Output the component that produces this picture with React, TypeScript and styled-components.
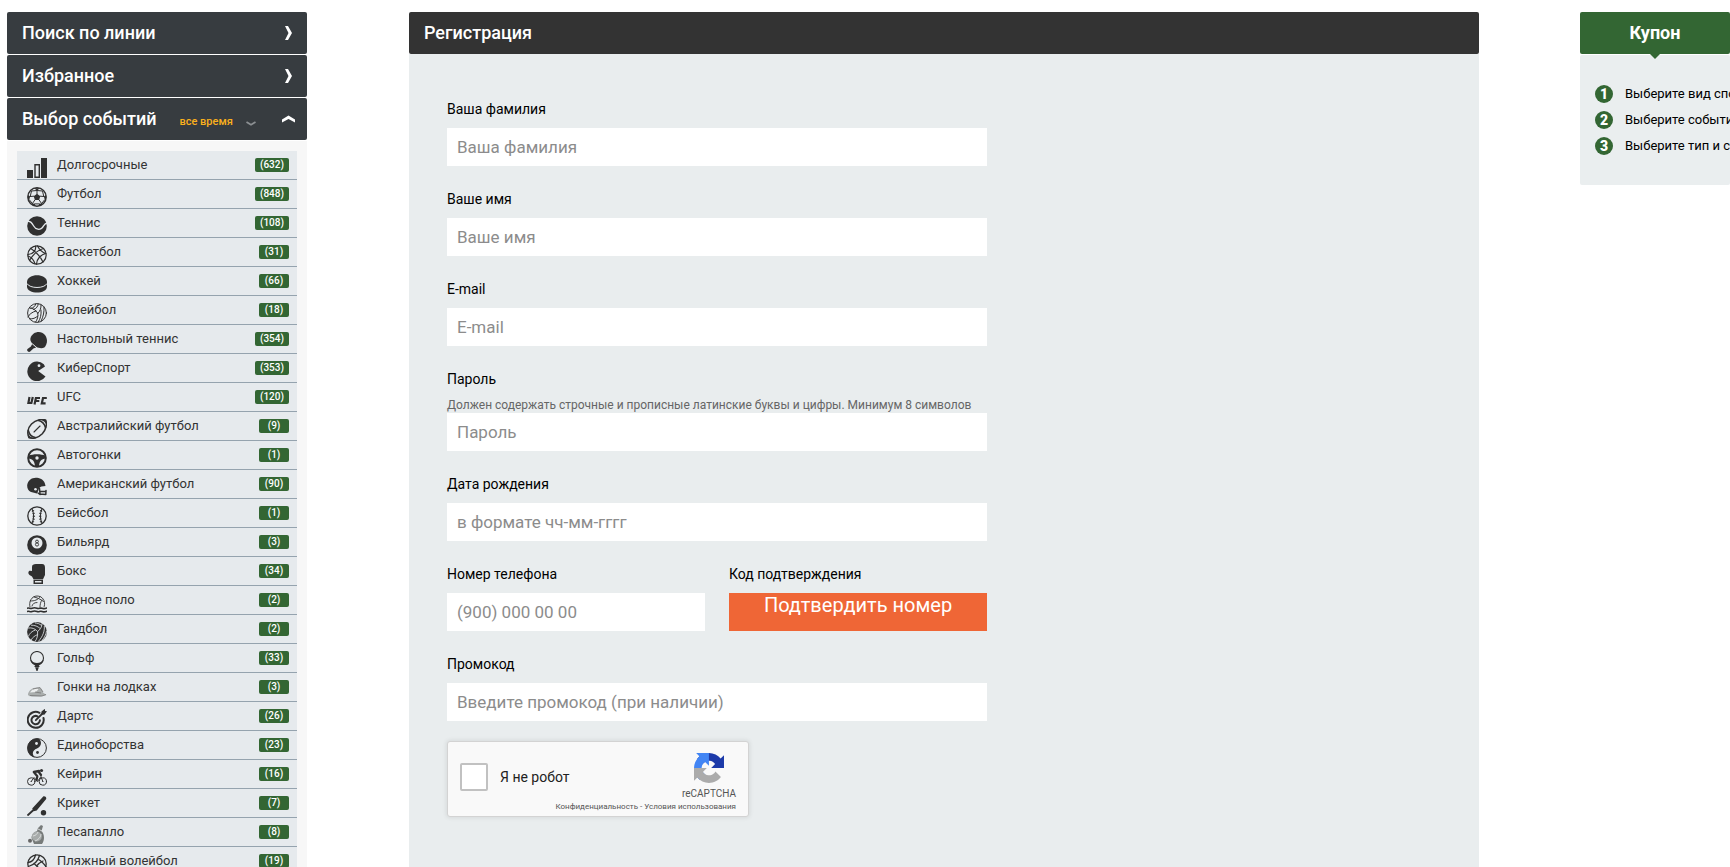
import React from "react";
import styled, { createGlobalStyle } from "styled-components";

const Global = createGlobalStyle`
  * { box-sizing: border-box; }
  html { scrollbar-width: none; }
  body { margin: 0; background: #fff; font-family: Roboto, "Noto Sans", sans-serif; }
`;

const Page = styled.div`
  display: flex;
  padding: 12px 0 0 7px;
  min-height: 100vh;
`;

const Sidebar = styled.aside`
  display: flex;
  flex-direction: column;
  flex: none;
  gap: 1px;
  width: 300px;
`;

const PanelButton = styled.button`
  display: flex;
  align-items: center;
  justify-content: space-between;
  height: 42px;
  flex: none;
  padding: 0 15px;
  border: 0;
  border-radius: 2px;
  background: #373c40;
  color: #fff;
  font: 500 18px/42px Roboto, sans-serif;
  text-align: left;
`;

const PanelBar = styled.div`
  display: flex;
  align-items: center;
  height: 42px;
  flex: none;
  padding: 0 11px 0 15px;
  border-radius: 2px;
  background: #373c40;
`;

const BarTitle = styled.h2`
  margin: 0;
  color: #fff;
  font: 500 18px/42px Roboto, sans-serif;
`;

const PeriodSelect = styled.select`
  appearance: none;
  margin: 6px 0 0 23px;
  padding: 0;
  border: 0;
  background: transparent;
  color: #fbb01c;
  font: 500 11px/16px Roboto, sans-serif;
`;

const PeriodMark = styled.svg`
  margin: 8px 0 0 12px;
`;

const Toggle = styled.button`
  display: flex;
  margin-left: auto;
  padding: 0;
  border: 0;
  background: transparent;
`;

const EventBox = styled.div`
  flex: 1;
  padding: 10px;
  background: #f7f7f7;
`;

const EventList = styled.ul`
  margin: 0;
  padding: 0;
  list-style: none;
`;

const EventLink = styled.a`
  display: flex;
  align-items: flex-start;
  height: 29px;
  padding: 0 8px 0 10px;
  border-bottom: 1px solid #95a3ae;
  background: #e6eaed;
  color: #333;
  font-size: 13px;
  line-height: 27px;
  text-decoration: none;
`;

const IconSlot = styled.svg`
  flex: none;
  width: 20px;
  height: 20px;
  margin: 7px 10px 0 0;
`;

const Count = styled.span`
  min-width: 30px;
  height: 14px;
  margin: 7px 0 0 auto;
  padding: 0 5px;
  border-radius: 2px;
  background: #336633;
  color: #fff;
  font-size: 10px;
  font-weight: 500;
  line-height: 14px;
  text-align: center;
`;

const Main = styled.main`
  display: flex;
  flex: 1;
  flex-direction: column;
  min-width: 0;
  margin: 0 101px 0 102px;
`;

const MainTitle = styled.h1`
  margin: 0;
  padding: 0 15px;
  border-radius: 2px;
  background: #333;
  color: #fff;
  font: 500 18px/42px Roboto, sans-serif;
`;

const Form = styled.form`
  flex: 1;
  padding: 42px 38px;
  background: #e9edee;
`;

const Fields = styled.div`
  display: flex;
  flex-direction: column;
  max-width: 540px;
`;

const Field = styled.div`
  display: flex;
  flex-direction: column;
  min-width: 0;
  margin-bottom: 20px;
`;

const Pair = styled.div`
  display: grid;
  grid-template-columns: 1fr 1fr;
  column-gap: 24px;
`;

const Label = styled.label`
  height: 32px;
  color: #000;
  font-size: 14px;
  line-height: 26px;
`;

const Hint = styled.p`
  height: 15px;
  margin: 0;
  color: #666;
  font-size: 12px;
  line-height: 15px;
  white-space: nowrap;
`;

const Input = styled.input`
  width: 100%;
  height: 38px;
  padding: 0 10px;
  border: 0;
  background: #fff;
  color: #333;
  font: 400 17px Roboto, sans-serif;
  &::placeholder { color: #8c8c8c; opacity: 1; }
`;

const ConfirmButton = styled.button`
  display: flex;
  align-items: flex-start;
  justify-content: center;
  height: 38px;
  padding: 0;
  border: 0;
  background: #ef6636;
  color: #fff;
  font: 400 20px/24px Roboto, sans-serif;
`;

const Captcha = styled.div`
  display: flex;
  width: 302px;
  height: 76px;
  padding: 0 12px;
  border: 1px solid #d3d3d3;
  border-radius: 3px;
  background: #f9f9f9;
  box-shadow: 0 0 4px 1px rgba(0, 0, 0, 0.08);
`;

const RobotLabel = styled.label`
  display: flex;
  align-self: flex-start;
  align-items: center;
  gap: 12px;
  margin-top: 21px;
  color: #222;
  font-size: 14px;
  line-height: 16px;
  white-space: nowrap;
`;

const RobotCheck = styled.input`
  appearance: none;
  width: 28px;
  height: 28px;
  margin: 0;
  border: 2px solid #c1c1c1;
  border-radius: 2px;
  background: #fff;
`;

const Brand = styled.div`
  display: flex;
  flex-direction: column;
  align-items: flex-end;
  flex: 1;
  width: 0;
  padding-top: 11px;
  color: #555;
`;

const BrandLogo = styled.svg`
  flex: none;
  margin-right: 12px;
`;

const BrandName = styled.span`
  margin-top: 5px;
  font-size: 10px;
  line-height: 12px;
`;

const BrandLinks = styled.span`
  font-size: 8px;
  line-height: 14px;
  white-space: nowrap;
  a { color: inherit; text-decoration: none; }
`;

const Coupon = styled.aside`
  flex: none;
  width: 150px;
  overflow: hidden;
`;

const CouponTab = styled.button`
  position: relative;
  display: block;
  width: 100%;
  height: 42px;
  padding: 0;
  border: 0;
  border-radius: 2px;
  background: #336633;
  color: #fff;
  font: 700 18px/42px Roboto, sans-serif;
  &::after {
    content: "";
    position: absolute;
    top: 100%;
    left: 50%;
    margin-left: -5px;
    border: 5px solid transparent;
    border-top-color: #336633;
    border-bottom-width: 0;
  }
`;

const Steps = styled.ol`
  display: flex;
  flex-direction: column;
  gap: 8px;
  margin: 1px 0 0;
  padding: 30px 15px;
  border-radius: 2px;
  background: #eaeeef;
  list-style: none;
`;

const Step = styled.li`
  display: flex;
  gap: 12px;
  color: #000;
  font-size: 13px;
  line-height: 18px;
  white-space: nowrap;
`;

const StepNumber = styled.span`
  flex: none;
  width: 18px;
  height: 18px;
  border-radius: 50%;
  background: #336633;
  color: #fff;
  font-size: 14px;
  font-weight: 900;
  text-align: center;
`;

const ink = "#303030";
const pale = "#e6eaed";
const line = { fill: "none", stroke: ink, strokeWidth: 1.1, strokeLinecap: "round", strokeLinejoin: "round" } as const;
const gap = { fill: "none", stroke: pale, strokeWidth: 1 } as const;

const icons: Record<string, React.ReactNode> = {
  bars: <><path fill={ink} d="M0 12h6v8H0zM14 0h6v20h-6z" /><path {...line} strokeLinejoin="miter" strokeWidth="1.4" d="M8 6.7h4.3v12.6H8z" /></>,
  football: <><circle {...line} strokeWidth="1.4" cx="10" cy="10" r="9.2" /><path fill={ink} d="M10 6.8l3.300 2.400-1.200 3.800H7.900L6.700 9.200zM7 1.200h6L10 3.600zM.9 8l2.200 1.500-.9 3.600-1.200-.6zM19.100 8l-2.200 1.500.9 3.600 1.200-.6zM5.200 16.500l2.600.2.500 2.400-2.800-.9zM14.800 16.500l-2.600.2-.5 2.400 2.800-.9z" /><path {...line} strokeWidth="1" d="M10 3.500v3.500M13.300 9.200l3.500.3M12.100 13l2.500 3.500M7.900 13l-2.500 3.500M6.700 9.200l-3.500.3M10 3.500L4.500 4l-1.300 5.500M10 3.500l5.500.5 1.300 5.500M2.500 13l2.900 3.500M17.500 13l-2.900 3.500M7.800 16.900h4.400" /></>,
  tennis: <><circle fill={ink} cx="10" cy="10" r="9.8" /><path {...gap} strokeWidth="1.3" d="M0 5.500C3.500 4.500 5 7 6.700 10c2 3.700 6.300 4.300 8.500 1.800C17 9.600 17.500 7.300 20 7" /></>,
  basketball: <g {...line} strokeWidth="1.2"><circle cx="10" cy="10" r="9.2" /><path d="M3.800 3.400C8 6 13.500 12 16 17M2.500 15.500C6 9.500 11 5 16.500 3.500M8.500 1C9.500 5 6 9.500 1 9.500M19.100 8.500C14 9.500 9.500 14 9.500 19.200M10.500 1c1.500 3 5 6.500 8.500 7.500M1 11c3 1 6 4.500 7 7.900" /></g>,
  puck: <><path fill={ink} d="M0 8c0-9 20-9 20 0v4.500c0 8-20 8-20 0z" /><path {...gap} d="M0 9.500c2.500 5.300 17.500 5.300 20 0" /></>,
  volleyball: <g {...line} strokeWidth="1"><circle cx="10" cy="10" r="9.4" /><path d="M10.800 10.200C9 7 5.500 5 2.600 4.800M10.800 10.200c2-1.500 3.600-5 3.200-8.600M10.800 10.200c.5 3-.3 6.500-2.300 9M6.500 6.500C9.500 5.500 11 3.500 11.200.8M3.800 5.500C6.500 5 8.300 3 8.800 1M9 8C5 9 2 11.500 1 14M10.900 13c-2.500 2-5 3.300-8.300 2.800M17 4c.3 5-.5 9-3 14.400M14 7c.5 4.500-.5 8.500-2.700 12" /></g>,
  paddle: <><path fill={ink} d="M3.500 6C5.500-.5 14-2 18 3c3.200 4.500 2.200 9.500-.7 12.500-2.300 1.200-6 .5-8-.5L5 11.200C3.700 9.500 3 8 3.500 6z" /><path fill={ink} d="M5.200 12l4 3.500-2.800 1.100-3.200 3C1.500 20.800-.8 18.600.5 17l3.400-2.600z" /><path {...gap} strokeWidth=".7" d="M4.700 11.200l5.500 4.800" /></>,
  pacman: <><path fill={ink} d="M16.800 3.200A9.800 9.800 0 1 0 18.500 15.500L11.200 10 18 5.500z" /><circle fill={pale} cx="12" cy="4.700" r="1.4" /></>,
  ufc: <g fill="none" stroke={ink} strokeWidth="2.2"><path d="M2.500 7L1.400 13h3L5.800 7M7.500 14.500l1.400-6.500h4.100M8.500 11h3.800M19.800 8h-3.800l-1.200 5.400h3.800" /></g>,
  aussie: <><path {...line} strokeWidth="1.5" d="M2.200 18.500C-.2 15.500.5 9 4.500 5 9 .5 16-.5 18.600 1.300 20.500 4.500 19 10.700 15.300 14.800 11 19.300 5 20 2.200 18.500z" /><path {...line} strokeWidth="1.6" d="M11.500 1.500c4 1 6 3.500 7 7M1.300 11.500c1 4 3.500 6.500 7 7" /><path fill={ink} d="M14 .8l5.300-.2.200 5.400C18.500 3.500 16.500 1.800 14 .8zM.8 14l.5 5.200 5.500.200C4 18.500 2 17 .8 14z" /><path {...line} d="M7 13L13 7" /></>,
  wheel: <><circle {...line} strokeWidth="2" cx="10" cy="10" r="8.800" /><path fill={ink} d="M1.500 7.800C6 5.800 14 5.800 18.500 7.800v2.900c-4 0-6 2-6.500 7.300H8C7.500 12.700 5.500 10.700 1.500 10.700z" /><circle fill={pale} cx="10" cy="10" r="1.7" /></>,
  helmet: <><path fill={ink} d="M.2 8C1 2.500 6-.3 11.500 1c4 .8 6.500 3.800 7 8l-4 .6c-1.500.6-2.700 1.800-3 3.400L10 16.500 4 15C1.200 13.700 0 11.500.2 8z" /><circle fill={pale} cx="8.500" cy="12.300" r="1.3" /><path {...line} strokeWidth="1.5" d="M12.500 11.500l.5 5.500 5.800.5.200-4M13 14.500h6M11 16l2 1.500" /></>,
  baseball: <><circle {...line} strokeWidth="1.3" cx="10" cy="10" r="9.2" /><path {...line} d="M5 2.800c2 4.500 2 10 0 14.500M15 2.800c-2 4.500-2 10 0 14.500" /><path {...line} strokeLinecap="butt" strokeWidth="2.4" strokeDasharray=".9 1.8" d="M5.800 4.500c1.400 3.500 1.400 8 0 11.500M14.200 4.500c-1.400 3.500-1.400 8 0 11.500" /></>,
  billiards: <><circle fill={ink} cx="10" cy="10" r="9.8" /><circle fill={pale} cx="10" cy="8" r="5.5" /><g fill="none" stroke={ink} strokeWidth=".9"><circle cx="10" cy="6.500" r="1.4" /><circle cx="10" cy="9.500" r="1.6" /></g></>,
  boxing: <><path fill={ink} d="M5 3C5 .8 6.500 0 9 0h6c2.300 0 3 1.500 3 4v7l-2 4.200H6.500L5 12.500 2.500 11C.8 9.500 1.200 6.800 3 6.800L5 7z" /><path fill={ink} d="M6.500 15.700H16V20H6.500z" /><path fill={pale} d="M8 17h6.500v1.500H8z" /></>,
  polo: <><g {...line} strokeWidth=".9"><path d="M3 14C1.500 9 4.500 3 10 3s9 5 7.200 10.500M3.300 8c4 0 8-1 9.700-4.300M7 4c2.500.5 6.500 2 9.500 4.500M5 13c.5-2 2-3.500 5-3.500M13 14c0-2.500.5-5 2-7" /></g><path {...line} strokeWidth="1.6" d="M0 15.300c2-1 3 .8 5 0s3-.8 5 0 3-.8 5 0 3 .4 5-.3M0 18.500c2-1 3 .8 5 0s3-.8 5 0 3-.8 5 0 3 .4 5-.3" /></>,
  handball: <><circle fill={ink} cx="10" cy="10" r="9.9" /><g {...gap} strokeWidth=".8"><path d="M1 6c4-.5 7 .5 9.500 3.500M10.500 9.500C13 8 15 5 15 1.500M10.500 9.500c.5 4-.5 7.500-2.500 10M4 3.200c4 0 6.500 1 9 3.200M8 1c2.500 0 4.500.8 6.500 2.500M8.500 8C5 9 2.500 11.500 1.300 14.500M10.800 12.500C8 13.500 5.500 15.500 4 18M17.300 4c.5 5-1.500 10.500-6 15.500M19.500 9c-.5 3.500-2 6.500-4.500 9.500" /></g></>,
  golf: <><circle {...line} strokeWidth="1.100" cx="10" cy="7" r="6.500" /><path fill={ink} d="M3.500 8.500c3 4.800 10 4.800 13 0 0 2.700-2 5-4 5.500l-1 1.200h-3L7.500 14c-2-.5-4-2.800-4-5.500zM7 15h6l-1.500 1.500h-3zM8.300 16.800h3.400L10.500 20h-1z" /></>,
  boat: <><path fill="#aaaead" d="M1 14c1-4 5-7 10-6.500 3 .4 4.500 2.500 5 5l3.500 2.500-6 1.500H6c-3 0-5.500-.8-5-2.500z" /><path fill="#eceeee" d="M3 12.500c2-3.500 6-4.700 8.500-3.500L9 12z" /><path fill="none" stroke="#777" strokeWidth=".8" d="M6 9l7-1.500 3 4.500M3 15.500l12 .5 4-1.500M8 12l6 1" /></>,
  darts: <><g {...line} strokeWidth="2"><path d="M12.500 3.800A8 8 0 1 0 16.500 9M10.500 7.300A4.200 4.200 0 1 0 12.900 11.300" /></g><path {...line} strokeWidth="1.8" d="M8.800 11.200L17 3" /><path fill={ink} d="M14.500 2.500L17.800-.2l.3 2.200 1.900.3-2.700 3.400-3-.3z" /></>,
  yinyang: <><circle fill={pale} stroke={ink} strokeWidth="1" cx="10" cy="10" r="9.4" /><path fill={ink} d="M12 .7C6-.8.500 4 .5 10S4 18.500 8 19.500c-4-4-2-7.500 2-9S15.500 4 12 .7z" /><circle fill={pale} cx="9.500" cy="5.500" r="1.4" /><circle fill={ink} cx="10.500" cy="14.500" r="1.4" /></>,
  cycling: <><g {...line} strokeWidth="1"><circle cx="4.200" cy="14.500" r="3.700" /><circle cx="15.800" cy="14.500" r="3.700" /><path d="M4.200 14.500L7 10.500l3.500 4L14 9.500l1.800 5M15.800 14.500h.1M4.200 14.500h.1" /></g><path {...line} strokeWidth="2.300" d="M12 4L6.800 5l3.500 4.200-.8 4M11.500 4.500l2.500 3.500" /><circle fill={ink} cx="14.500" cy="3.500" r="1.600" /></>,
  cricket: <><path fill={ink} d="M16 .8c1.200-1.400 4.200.600 3 2.400L9.700 14.500l-3 .8L5.200 12.500z" /><path {...line} strokeWidth="1.8" d="M7 13.500L1 19" /><circle fill={ink} cx="16.500" cy="16.700" r="2.700" /></>,
  pesapallo: <><path fill="#777b7a" d="M11 3l3-3 2 1-1.500 5c3 3 3.500 9 .5 13H7L4.500 13c0-3 3-6 5.500-7z" /><circle fill="#a7abaa" cx="9.800" cy="11.500" r="5" /><path fill="none" stroke="#e6e8e8" strokeWidth=".8" d="M11 4l4 2M6 11c3-.5 4-2 5-4M8 16c3-1 6-4 6-7" /><circle fill="#666" cx="3" cy="15.800" r="2" /></>,
  beach: <g {...line} strokeWidth="1.3"><circle cx="10" cy="10" r="9.2" /><path d="M1 8.500c3.500-.5 6.500-3 7.500-7.500M1.500 12.500C6.500 11 11 7 12.500 1.500M7 9.500l8.500 8M11.500 5.500c3 1.500 5.500 4.500 7.500 7M9.500 12c2-2.500 4-4 6.500-5" /></g>,
};

const events: [string, string, number][] = [
  ["Долгосрочные", "bars", 632],
  ["Футбол", "football", 848],
  ["Теннис", "tennis", 108],
  ["Баскетбол", "basketball", 31],
  ["Хоккей", "puck", 66],
  ["Волейбол", "volleyball", 18],
  ["Настольный теннис", "paddle", 354],
  ["КиберСпорт", "pacman", 353],
  ["UFC", "ufc", 120],
  ["Австралийский футбол", "aussie", 9],
  ["Автогонки", "wheel", 1],
  ["Американский футбол", "helmet", 90],
  ["Бейсбол", "baseball", 1],
  ["Бильярд", "billiards", 3],
  ["Бокс", "boxing", 34],
  ["Водное поло", "polo", 2],
  ["Гандбол", "handball", 2],
  ["Гольф", "golf", 33],
  ["Гонки на лодках", "boat", 3],
  ["Дартс", "darts", 26],
  ["Единоборства", "yinyang", 23],
  ["Кейрин", "cycling", 16],
  ["Крикет", "cricket", 7],
  ["Песапалло", "pesapallo", 8],
  ["Пляжный волейбол", "beach", 19],
];

const Chevron = () => (
  <svg width="7" height="14" viewBox="0 0 7 14" aria-hidden="true">
    <path fill="#fff" d="M0 0h3l4 7-4 7H0l3.500-7z" />
  </svg>
);

type TextFieldProps = { id: string; label: string; placeholder: string; type?: string; hint?: string };

const TextField = ({ id, label, placeholder, type = "text", hint }: TextFieldProps) => (
  <Field>
    <Label htmlFor={id}>{label}</Label>
    {hint && <Hint>{hint}</Hint>}
    <Input id={id} type={type} placeholder={placeholder} />
  </Field>
);

export default function App() {
  return (
    <>
      <Global />
      <Page>
        <Sidebar>
          <PanelButton type="button">Поиск по линии<Chevron /></PanelButton>
          <PanelButton type="button">Избранное<Chevron /></PanelButton>
          <PanelBar>
            <BarTitle>Выбор событий</BarTitle>
            <PeriodSelect aria-label="Период"><option>все время</option></PeriodSelect>
            <PeriodMark width="10" height="5" viewBox="0 0 10 5" aria-hidden="true">
              <path fill="none" stroke="#8b8f92" strokeWidth="1.8" d="M.5 1L5 3.700 9.500 1" />
            </PeriodMark>
            <Toggle type="button" aria-label="Свернуть">
              <svg width="15" height="8" viewBox="0 0 15 8" aria-hidden="true">
                <path fill="#fff" d="M1 4.500L7.500.5l6.500 4v3l-6.500-3.500L1 7.500z" />
              </svg>
            </Toggle>
          </PanelBar>
          <EventBox>
            <EventList>
              {events.map(([name, icon, count]) => (
                <li key={name}>
                  <EventLink href="#">
                    <IconSlot viewBox="0 0 20 20" aria-hidden="true">{icons[icon]}</IconSlot>
                    {name}
                    <Count>({count})</Count>
                  </EventLink>
                </li>
              ))}
            </EventList>
          </EventBox>
        </Sidebar>

        <Main>
          <MainTitle>Регистрация</MainTitle>
          <Form>
            <Fields>
              <TextField id="surname" label="Ваша фамилия" placeholder="Ваша фамилия" />
              <TextField id="name" label="Ваше имя" placeholder="Ваше имя" />
              <TextField id="email" label="E-mail" placeholder="E-mail" type="email" />
              <TextField
                id="password"
                label="Пароль"
                placeholder="Пароль"
                type="password"
                hint="Должен содержать строчные и прописные латинские буквы и цифры. Минимум 8 символов"
              />
              <TextField id="birth" label="Дата рождения" placeholder="в формате чч-мм-гггг" />
              <Pair>
                <TextField id="phone" label="Номер телефона" placeholder="(900) 000 00 00" type="tel" />
                <Field>
                  <Label htmlFor="confirm">Код подтверждения</Label>
                  <ConfirmButton id="confirm" type="button">Подтвердить номер</ConfirmButton>
                </Field>
              </Pair>
              <TextField id="promo" label="Промокод" placeholder="Введите промокод (при наличии)" />
              <Captcha>
                <RobotLabel>
                  <RobotCheck type="checkbox" />
                  Я не робот
                </RobotLabel>
                <Brand>
                  <BrandLogo width="30" height="30" viewBox="0 0 64 64" aria-hidden="true">
                    <path fill="#1c3aa9" d="M64 31.955l-.033-1.370V4.687l-7.160 7.160C50.948 4.674 42.033.093 32.050.093c-10.389 0-19.622 4.960-25.458 12.640l11.736 11.860a15.550 15.550 0 0 1 4.754-5.334c2.050-1.600 4.952-2.906 8.968-2.906.485 0 .860.057 1.135.163 4.976.393 9.288 3.140 11.828 7.124l-8.307 8.307L64 31.953" />
                    <path fill="#4285f4" d="M31.862.094l-1.370.033H4.594l7.160 7.160C4.580 13.147 0 22.060 0 32.046c0 10.389 4.960 19.622 12.640 25.458L24.500 45.768a15.550 15.550 0 0 1-5.334-4.754c-1.600-2.050-2.906-4.952-2.906-8.968 0-.485.057-.86.163-1.135.393-4.976 3.140-9.288 7.124-11.828l8.307 8.307L31.860.095" />
                    <path fill="#ababab" d="M.001 32.045l.033 1.370v25.898l7.160-7.160c5.860 7.173 14.774 11.754 24.760 11.754 10.389 0 19.622-4.960 25.458-12.640l-11.736-11.860a15.550 15.550 0 0 1-4.754 5.334c-2.050 1.600-4.952 2.906-8.968 2.906-.485 0-.860-.057-1.135-.163-4.976-.393-9.288-3.140-11.828-7.124l8.307-8.307L0 32.048" />
                  </BrandLogo>
                  <BrandName>reCAPTCHA</BrandName>
                  <BrandLinks><a href="#">Конфиденциальность</a> - <a href="#">Условия использования</a></BrandLinks>
                </Brand>
              </Captcha>
            </Fields>
          </Form>
        </Main>

        <Coupon>
          <CouponTab type="button">Купон</CouponTab>
          <Steps>
            {["Выберите вид спорта", "Выберите событие", "Выберите тип и сумму ставки"].map((text, i) => (
              <Step key={text}><StepNumber>{i + 1}</StepNumber>{text}</Step>
            ))}
          </Steps>
        </Coupon>
      </Page>
    </>
  );
}
